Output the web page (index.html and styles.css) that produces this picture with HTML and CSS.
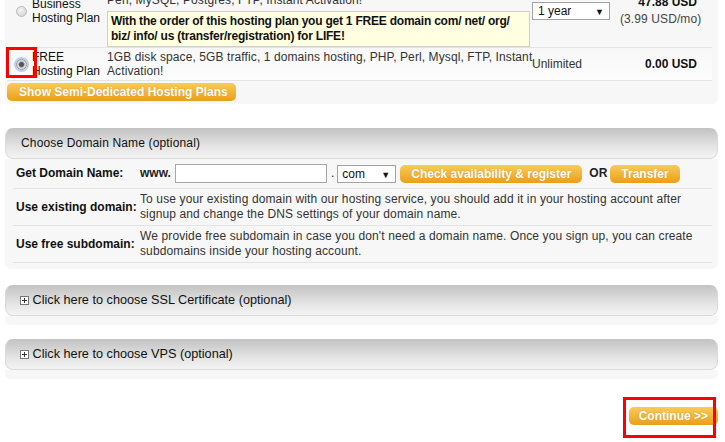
FILE: index.html
```html
<!DOCTYPE html>
<html lang="en">
<head>
    <meta charset="UTF-8">
    <title>Order Hosting</title>
    <link rel="stylesheet" href="styles.css">
</head>
<body>
<div class="page">

    <div class="plans">
        <table class="plan-table">
            <colgroup>
                <col class="c-pick"><col class="c-name"><col class="c-desc"><col class="c-period"><col class="c-price">
            </colgroup>
            <tr class="plan-row">
                <td class="pick"><input type="radio" name="plan" class="radio"></td>
                <td class="plan-name">Business<br>Hosting Plan</td>
                <td class="plan-desc first">
                    <div class="desc-text">10GB disk space, 100GB traffic, 10 domains hosting, PHP,<br>Perl, MySQL, Postgres, FTP, Instant Activation!</div>
                    <div class="promo">With the order of this hosting plan you get 1 FREE domain com/ net/ org/<br>biz/ info/ us (transfer/registration) for LIFE!</div>
                </td>
                <td class="plan-period">
                    <span class="select-box period-box">
                        <select class="select">
                            <option>1 year</option>
                            <option>2 years</option>
                        </select>
                    </span>
                </td>
                <td class="plan-price first-price"><b>47.88 USD</b><br><span class="per-month">(3.99 USD/mo)</span></td>
            </tr>
            <tr class="plan-row free">
                <td class="pick">
                    <input type="radio" name="plan" class="radio" checked>
                    <span class="mark mark-radio"></span>
                </td>
                <td class="plan-name">FREE<br>Hosting Plan</td>
                <td class="plan-desc"><div class="desc-text">1GB disk space, 5GB traffic, 1 domains hosting, PHP, Perl, Mysql, FTP, Instant<br>Activation!</div></td>
                <td class="plan-period">Unlimited</td>
                <td class="plan-price"><b>0.00 USD</b></td>
            </tr>
        </table>
        <a href="#" class="btn btn-semi">Show Semi-Dedicated Hosting Plans</a>
    </div>

    <div class="box domain-box">
        <div class="box-head">Choose Domain Name (optional)</div>
        <div class="box-body">
            <table class="domain-table">
                <colgroup><col class="c-label"><col></colgroup>
                <tr>
                    <td class="label">Get Domain Name:</td>
                    <td class="domain-line">
                        <b class="www">www.</b>
                        <input type="text" class="domain-input">
                        <span class="dot">.</span>
                        <span class="select-box tld-box">
                            <select class="select">
                                <option>com</option>
                                <option>net</option>
                                <option>org</option>
                            </select>
                        </span>
                        <a href="#" class="btn btn-check">Check availability &amp; register</a>
                        <b class="or">OR</b>
                        <a href="#" class="btn btn-transfer">Transfer</a>
                    </td>
                </tr>
                <tr>
                    <td class="label">Use existing domain:</td>
                    <td class="info">To use your existing domain with our hosting service, you should add it in your hosting account after<br>signup and change the DNS settings of your domain name.</td>
                </tr>
                <tr>
                    <td class="label">Use free subdomain:</td>
                    <td class="info">We provide free subdomain in case you don't need a domain name. Once you sign up, you can create<br>subdomains inside your hosting account.</td>
                </tr>
            </table>
        </div>
    </div>

    <div class="box fold-box">
        <div class="box-head">
            <svg class="plus" width="9" height="9" viewBox="0 0 9 9"><rect x="0.5" y="0.5" width="8" height="8" fill="#fff" stroke="#777"/><path d="M2 4.5h5M4.5 2v5" stroke="#333" stroke-width="1"/></svg>
            Click here to choose SSL Certificate (optional)
        </div>
        <div class="fold-foot"></div>
    </div>

    <div class="box fold-box vps">
        <div class="box-head">
            <svg class="plus" width="9" height="9" viewBox="0 0 9 9"><rect x="0.5" y="0.5" width="8" height="8" fill="#fff" stroke="#777"/><path d="M2 4.5h5M4.5 2v5" stroke="#333" stroke-width="1"/></svg>
            Click here to choose VPS (optional)
        </div>
        <div class="fold-foot"></div>
    </div>

    <div class="actions">
        <div class="continue-wrap">
            <a href="#" class="btn btn-continue">Continue &gt;&gt;</a>
            <span class="mark mark-continue"></span>
        </div>
    </div>

</div>
</body>
</html>
```

FILE: styles.css
```css
body {
    margin: 0;
    background: #fff;
    font-family: "Liberation Sans", Arial, sans-serif;
    font-size: 12px;
    color: #333;
}
.page {
    width: 713px;
    margin: -25px 0 0 5px;
    padding-bottom: 20px;
}

/* plans */
.plans {
    background: #f7f7f7;
    border-radius: 0 0 6px 6px;
    padding: 0 6px 3px 2px;
}
.plan-table {
    width: 705px;
    table-layout: fixed;
    border-collapse: collapse;
}
.c-pick { width: 25px; }
.c-name { width: 75px; }
.c-desc { width: 423px; }
.c-period { width: 90px; }
.c-price { width: 92px; }
.plan-table td {
    padding: 2px 0;
    vertical-align: middle;
    line-height: 14px;
}
.plan-row {
    border-bottom: 1px solid #e4e4e4;
}
.plan-row.free {
    background: linear-gradient(#f7f7f7, #fdfdfd);
}
.pick {
    position: relative;
}
.plan-name {
    color: #111;
    white-space: nowrap;
}
.plan-desc {
    white-space: nowrap;
}
.desc-text {
    letter-spacing: 0.1px;
}
.plan-desc.first {
    padding: 4px 0 0 0;
}
.promo {
    margin-top: 4px;
    padding: 2px 3px;
    background: #ffffe1;
    border: 1px solid #cfcfcf;
    color: #111;
    font-weight: bold;
    line-height: 15px;
    letter-spacing: -0.22px;
}
.plan-period {
    padding-left: 2px !important;
}
.period-box {
    margin-bottom: 1px;
}
.plan-price {
    text-align: right;
    padding-right: 15px !important;
    color: #111;
    white-space: nowrap;
    overflow: visible;
}
.first-price {
    line-height: 17px !important;
    padding-bottom: 2px !important;
}
.per-month {
    color: #444;
    letter-spacing: 0.1px;
}

/* radios */
.radio {
    appearance: none;
    -webkit-appearance: none;
    display: block;
    width: 11px;
    height: 11px;
    margin: 0 0 0 9px;
    border-radius: 50%;
    border: 1px solid #bcbcbc;
    background: radial-gradient(circle at 40% 35%, #f4f4f4, #cdcdcd);
}
.radio:checked {
    background: radial-gradient(circle, #555 0 2px, #8a8a8a 2.5px, #e0e0e0 3.5px, #c4c4c4 6px);
    border-color: #9a9a9a;
    box-shadow: 0 0 0 2px #b9d0f2;
}

/* annotation frames */
.mark {
    position: absolute;
    border: 3px solid #f00;
    box-sizing: border-box;
    pointer-events: none;
}
.mark-radio {
    left: -1px;
    top: -1px;
    width: 31px;
    height: 31px;
}
.mark-continue {
    left: -6px;
    top: -10px;
    width: 93px;
    height: 41px;
}

/* buttons */
.btn {
    display: inline-block;
    height: 18px;
    line-height: 18px;
    padding: 0 11px;
    border-radius: 5px;
    background: linear-gradient(#f9cb58, #e99f1a);
    color: #fff;
    font-weight: bold;
    font-size: 12px;
    text-decoration: none;
    white-space: nowrap;
    text-shadow: 0 0 1px rgba(170, 90, 0, 0.45);
    vertical-align: middle;
}
.btn-semi {
    margin-top: 2px;
    width: 205px;
    padding: 0 12px;
}

/* selects */
.select-box {
    position: relative;
    display: inline-block;
    vertical-align: middle;
}
.select {
    appearance: none;
    -webkit-appearance: none;
    display: block;
    height: 18px;
    margin: 0;
    padding: 0 14px 0 5px;
    border: 1px solid #a3a3a3;
    border-radius: 0;
    background: #fff;
    font-family: "Liberation Sans", Arial, sans-serif;
    font-size: 12px;
    color: #111;
    box-sizing: border-box;
}
.select-box::after {
    content: "\25BC";
    position: absolute;
    right: 6px;
    top: 3px;
    font-size: 9px;
    color: #111;
    pointer-events: none;
}
.period-box .select { width: 78px; }
.tld-box .select { width: 59px; padding-left: 4px; }

/* boxes */
.box-head {
    height: 29px;
    line-height: 29px;
    padding-left: 15px;
    border: 1px solid #dadada;
    border-top-color: #c4c4c4;
    border-radius: 8px;
    background: linear-gradient(#c4c4c4, #e4e4e4 60%, #f3f3f3);
    color: #111;
    font-size: 12px;
    letter-spacing: 0.15px;
}
.domain-box {
    margin-top: 24px;
}
.box-body {
    background: #f7f7f7;
    border-radius: 0 0 6px 6px;
    padding: 0 6px 6px 8px;
}
.domain-table {
    width: 699px;
    border-collapse: collapse;
}
.c-label { width: 127px; }
.domain-table tr {
    border-bottom: 1px solid #e4e4e4;
}
.domain-table td {
    padding: 3px 0;
    vertical-align: middle;
    line-height: 15px;
}
.label {
    padding-left: 3px !important;
    font-weight: bold;
    color: #111;
    white-space: nowrap;
}
.domain-line {
    height: 23px;
    white-space: nowrap;
    font-size: 0;
}
.domain-line > * {
    font-size: 12px;
    vertical-align: middle;
}
.www {
    color: #222;
}
.domain-input {
    width: 152px;
    height: 19px;
    margin: 0 0 0 4px;
    padding: 0 3px;
    border: 1px solid #a5a5a5;
    box-sizing: border-box;
    font-family: "Liberation Sans", Arial, sans-serif;
}
.dot {
    margin: 0 3px 0 4px;
    color: #222;
}
.btn-check {
    margin-left: 4px;
}
.or {
    margin: 0 3px 0 7px;
    color: #222;
}
.info {
    white-space: nowrap;
    letter-spacing: 0.12px;
}

.fold-box {
    margin-top: 16px;
}
.fold-box.vps {
    margin-top: 14px;
}
.fold-box .box-head {
    padding-left: 14px;
    font-size: 12.7px;
    letter-spacing: 0;
}
.plus {
    vertical-align: -1px;
}
.fold-foot {
    height: 9px;
    background: #f7f7f7;
    border-radius: 0 0 5px 5px;
}

.actions {
    display: flex;
    justify-content: flex-end;
    margin-top: 28px;
}
.continue-wrap {
    position: relative;
}
.btn-continue {
    padding: 0 10px;
    display: block;
}
```
